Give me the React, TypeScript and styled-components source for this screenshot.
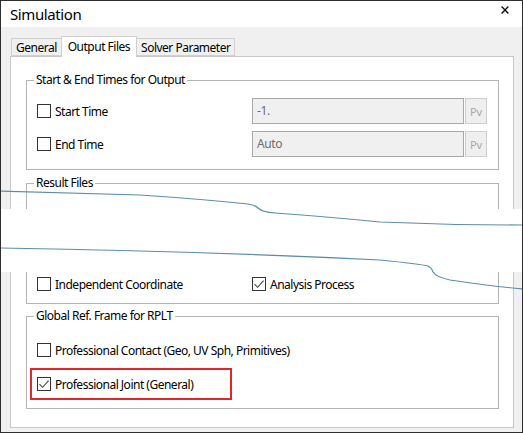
import React from "react";
import styled, { createGlobalStyle } from "styled-components";

const GlobalStyle = createGlobalStyle`
  html, body {
    margin: 0;
    padding: 0;
    background: #fff;
  }
  body {
    font-family: "Noto Sans", "Open Sans", sans-serif;
  }
`;

const Window = styled.div`
  position: relative;
  width: 523px;
  height: 433px;
  box-sizing: border-box;
  border: 1px solid #2e2e2e;
  background: #f0f0f0;
  display: flex;
  flex-direction: column;
  overflow: hidden;
  color: #000;
`;

const TitleBar = styled.div`
  flex: none;
  height: 26px;
  background: #fff;
  display: flex;
  align-items: flex-start;
  justify-content: space-between;
  padding: 0 13px 0 9px;
`;

const Title = styled.span`
  font-size: 15px;
  line-height: 26px;
  letter-spacing: -0.4px;
`;

const CloseButton = styled.svg`
  margin-top: 5px;
  width: 8px;
  height: 8px;
`;

const Body = styled.div`
  flex: 1;
  display: flex;
  flex-direction: column;
  padding: 9px 8px 4px 9px;
`;

const TabStrip = styled.div`
  display: flex;
  align-items: flex-end;
  height: 20px;
  padding-left: 1px;
  position: relative;
  z-index: 1;
`;

const Tab = styled.div<{ $active?: boolean }>`
  box-sizing: border-box;
  height: ${p => (p.$active ? "21px" : "18px")};
  margin-bottom: ${p => (p.$active ? "-1px" : "0")};
  margin-right: -1px;
  padding: ${p => (p.$active ? "0 6px 2px" : "0 4px")};
  display: flex;
  align-items: center;
  border: 1px solid #d0d0d0;
  border-bottom: ${p => (p.$active ? "none" : "1px solid #d0d0d0")};
  background: ${p => (p.$active ? "#fff" : "#f0f0f0")};
  font-size: 12px;
  letter-spacing: -0.5px;
  white-space: nowrap;
`;

const Panel = styled.div`
  flex: none;
  box-sizing: border-box;
  height: 372px;
  background: #fff;
  border: 1px solid #c8c8c8;
  padding: 15px 14px 0 15px;
  display: flex;
  flex-direction: column;
`;

const Group = styled.fieldset<{ $pad: string; $gap?: number }>`
  margin: ${p => p.$gap ?? 0}px 0 0;
  padding: ${p => p.$pad};
  min-width: 0;
  border: 1px solid #b4b4b4;
`;

const Legend = styled.legend`
  margin-left: -3px;
  padding: 0 2px;
  font-size: 12px;
  line-height: 16px;
  letter-spacing: -0.5px;
`;

const Row = styled.div<{ $height: number }>`
  display: grid;
  grid-template-columns: 214px 212px 22px;
  column-gap: 1px;
  align-items: center;
  height: ${p => p.$height}px;

  & + & {
    margin-top: 7px;
  }
`;

const CheckLabel = styled.label`
  display: flex;
  align-items: center;
  gap: 4px;
  font-size: 12px;
  letter-spacing: -0.5px;
  white-space: nowrap;
`;

const Box = styled.span`
  flex: none;
  width: 14px;
  height: 14px;
  box-sizing: border-box;
  border: 1px solid #333;
  background: #fff;
  display: flex;
  align-items: center;
  justify-content: center;
`;

const Field = styled.div`
  box-sizing: border-box;
  height: 100%;
  border: 1px solid #a9a9a9;
  background: #f0f0f0;
  color: #6d6d6d;
  font-size: 12px;
  letter-spacing: -0.4px;
  display: flex;
  align-items: center;
  padding: 0 0 2px 4px;
`;

const PvButton = styled.div`
  box-sizing: border-box;
  height: 100%;
  border: 1px solid #cfcfcf;
  background: #efefef;
  color: #a8a8a8;
  font-size: 11px;
  display: flex;
  align-items: center;
  justify-content: center;
`;

const Highlight = styled.div`
  box-sizing: border-box;
  width: 202px;
  height: 32px;
  margin: 8px 0 0 -7px;
  padding-left: 5px;
  border: 2px solid #e3262a;
  display: flex;
  align-items: center;
`;

const CutMark = styled.svg`
  position: absolute;
  inset: 0;
  width: 521px;
  height: 431px;
  pointer-events: none;
  z-index: 2;
`;

function Check({ checked, label }: { checked?: boolean; label: string }) {
  return (
    <CheckLabel>
      <Box>
        {checked && (
          <svg width="12" height="12" viewBox="0 0 12 12">
            <path d="M1.5 6.2 L4.6 9.3 L10.6 2.6" fill="none" stroke="#444" strokeWidth="1.1" />
          </svg>
        )}
      </Box>
      {label}
    </CheckLabel>
  );
}

function TimeRow({ label, value }: { label: string; value: string }) {
  return (
    <Row $height={26}>
      <Check label={label} />
      <Field>{value}</Field>
      <PvButton>Pv</PvButton>
    </Row>
  );
}

export default function App() {
  return (
    <>
      <GlobalStyle />
      <Window>
        <TitleBar>
          <Title>Simulation</Title>
          <CloseButton viewBox="0 0 8 8">
            <path d="M0.6 0.6 L7.4 7.4 M7.4 0.6 L0.6 7.4" stroke="#111" strokeWidth="1.4" />
          </CloseButton>
        </TitleBar>
        <Body>
          <TabStrip>
            <Tab>General</Tab>
            <Tab $active>Output Files</Tab>
            <Tab>Solver Parameter</Tab>
          </TabStrip>
          <Panel>
            <Group $pad="10px 12px 12px 10px">
              <Legend>Start &amp; End Times for Output</Legend>
              <TimeRow label="Start Time" value="-1." />
              <TimeRow label="End Time" value="Auto" />
            </Group>
            <Group $pad="83px 12px 9px 10px" $gap={5}>
              <Legend>Result Files</Legend>
              <Row $height={20}>
                <Check label="Independent Coordinate" />
                <Check checked label="Analysis Process" />
              </Row>
            </Group>
            <Group $pad="16px 12px 8px 10px" $gap={4}>
              <Legend>Global Ref. Frame for RPLT</Legend>
              <Row $height={20}>
                <Check label="Professional Contact (Geo, UV Sph, Primitives)" />
              </Row>
              <Highlight>
                <Check checked label="Professional Joint (General)" />
              </Highlight>
            </Group>
          </Panel>
        </Body>
        {/* break in the dialog: blank band with two torn edges */}
        <CutMark viewBox="1 1 521 431">
          <rect x="1" y="209" width="521" height="63" fill="#fff" />
          <path
            d="M0 191 L140 195 Q200 199 248 204 Q255 205 258 208 Q262 212 275 213 Q330 217 380 222 Q450 225 523 225"
            fill="none"
            stroke="#5a8ea8"
            strokeWidth="1.2"
          />
          <path
            d="M0 248 Q200 251 380 260 Q420 264 428 266 Q432 268 433 272 Q436 277 450 280 Q490 286 523 289"
            fill="none"
            stroke="#5a8ea8"
            strokeWidth="1.2"
          />
        </CutMark>
      </Window>
    </>
  );
}
